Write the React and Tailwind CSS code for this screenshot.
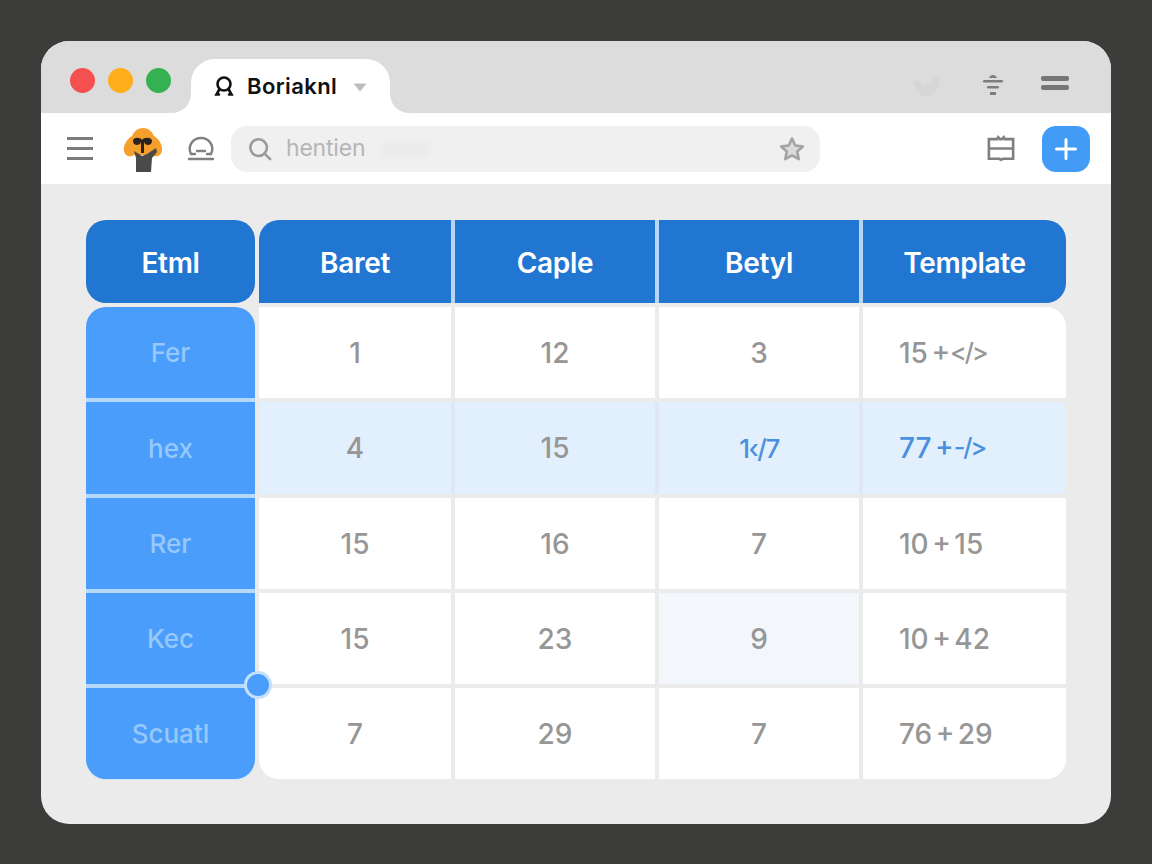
// Browser window with a spreadsheet style table
const Tail = ({ children }) => <span className="text-[25px] tracking-[-2px]">{children}</span>;

const rows = [
  { label: "Fer", cells: ["1", "12", "3", <>15 + <Tail>&lt;/&gt;</Tail></>] },
  { label: "hex", cells: ["4", "15", <span className="text-[26px] tracking-[-1.5px]">1‹/7</span>, <>77 + <Tail>-/&gt;</Tail></>], active: true },
  { label: "Rer", cells: ["15", "16", "7", "10 + 15"] },
  { label: "Kec", cells: ["15", "23", "9", "10 + 42"] },
  { label: "Scuatl", cells: ["7", "29", "7", "76 + 29"] },
];

const headers = [
  { text: "Etml", className: "rounded-[20px]" },
  { text: "Baret", className: "rounded-tl-[20px] shadow-[4px_0_0_#b8d5f5]" },
  { text: "Caple", className: "shadow-[4px_0_0_#b8d5f5]" },
  { text: "Betyl", className: "shadow-[4px_0_0_#b8d5f5]" },
  { text: "Template", className: "rounded-tr-[20px] rounded-br-[20px]" },
];

// Rounded corners and fills for body cells that are not plain white
const cellClass = (rowIndex, cellIndex, active) => {
  const classes = [];
  if (active) classes.push("bg-[#e2effc]");
  else if (rowIndex === 3 && cellIndex === 2) classes.push("bg-[#f3f7fc]");
  else classes.push("bg-white");
  if (active && cellIndex < 3) classes.push("shadow-[4px_0_0_#dfe8f2]");
  if (rowIndex === 0 && cellIndex === 3) classes.push("rounded-tr-[20px]");
  if (rowIndex === 4 && cellIndex === 0) classes.push("rounded-bl-[20px]");
  if (rowIndex === 4 && cellIndex === 3) classes.push("rounded-br-[20px]");
  // The last column starts at a fixed inset instead of being centered
  classes.push(cellIndex === 3 ? "justify-start pl-[36px]" : "justify-center");
  return classes.join(" ");
};

const textClass = (active, cellIndex) =>
  active && cellIndex >= 2 ? "text-[#4a90e0]" : "text-[#969696]";

const labelClass = (rowIndex) => {
  if (rowIndex === 0) return "rounded-t-[20px] shadow-[0_4px_0_#b5d9fc]";
  if (rowIndex === 4) return "rounded-b-[20px] shadow-[0_1px_0_#cfe5fb]";
  return "shadow-[0_4px_0_#b5d9fc]";
};

const TabIcon = () => (
  <svg width="22" height="22" viewBox="0 0 22 22" fill="none" stroke="#111" strokeWidth="2.6" strokeLinecap="round">
    <circle cx="11" cy="9" r="6.5" />
    <path d="M6 15 L3.5 19.5 H6 M16 15 L18.5 19.5 H16" />
  </svg>
);

const Logo = () => (
  <svg width="40" height="46" viewBox="0 0 40 46">
    <path d="M20 1 C26 1 29 5 31 9 C36 12 40 18 39 24 C38 29 33 31 29 28 L11 28 C7 31 2 29 1 24 C0 18 4 12 9 9 C11 5 14 1 20 1 Z" fill="#f59f2c" />
    <path d="M11 24 L16 27 L19 29 L24 27 L33 21 L34 25 L29 31 L28 45 H13 L13 31 Z" fill="#4a4a4a" />
    <path d="M10 14 C10 10 17 10 19 13 C21 10 29 10 29 14 C29 19 22 19 21 15 L21 26 H18 L18 15 C17 19 10 19 10 14 Z" fill="#2a2320" />
  </svg>
);

const App = () => (
  <div className="w-[1152px] h-[864px] bg-[#3c3c3b] p-[41px] font-['Inter',sans-serif]">
    <div className="w-[1070px] h-[783px] rounded-[28px] overflow-hidden bg-[#ebebeb] flex flex-col">
      {/* Title bar */}
      <div className="h-[72px] bg-[#dcdcdc] flex items-end pl-[29px] pr-[42px]">
        <div className="flex gap-[13px] self-start mt-[27px]">
          <span className="size-[25px] rounded-full bg-[#f45050]" />
          <span className="size-[25px] rounded-full bg-[#fdae1a]" />
          <span className="size-[25px] rounded-full bg-[#34b150]" />
        </div>
        <div className="relative ml-[20px] w-[199px] h-[54px] bg-white rounded-t-[24px] flex items-center pl-[22px]">
          <svg className="absolute -left-[20px] bottom-0" width="20" height="20" viewBox="0 0 20 20">
            <path d="M20 0 V20 H0 C12 20 20 12 20 0 Z" fill="#fff" />
          </svg>
          <svg className="absolute -right-[20px] bottom-0" width="20" height="20" viewBox="0 0 20 20">
            <path d="M0 0 V20 H20 C8 20 0 12 0 0 Z" fill="#fff" />
          </svg>
          <TabIcon />
          <span className="ml-[12px] text-[22px] font-semibold text-[#111] leading-none tracking-[0.4px]">Boriaknl</span>
          <svg className="ml-[16px] mt-[2px]" width="14" height="9" viewBox="0 0 14 9">
            <path d="M0.5 0.5 H13.5 L7 8.5 Z" fill="#bdbdbd" />
          </svg>
        </div>
        <div className="ml-auto self-start mt-[30px] flex items-center">
          <svg width="30" height="26" viewBox="0 0 30 26">
            <path d="M2 8 C6 6 9 10 11 14 C13 10 18 10 18 13 C20 8 23 3 27 1 C29 8 26 20 17 23 C9 25 2 18 2 8 Z" fill="#d6d6d6" />
          </svg>
          <svg className="ml-[39px] mb-[4px]" width="24" height="26" viewBox="0 0 24 26" fill="#7d7d7d">
            <path d="M8 7 C9 3 15 3 16 7 Z" />
            <rect x="2" y="9" width="20" height="2.5" rx="1.2" />
            <rect x="6" y="15" width="12" height="2.5" rx="1.2" />
            <rect x="9" y="21" width="6" height="3" />
          </svg>
          <div className="ml-[36px] mb-[6px] w-[28px] flex flex-col gap-[4px]">
            <span className="h-[5px] rounded-[2px] bg-[#757575]" />
            <span className="h-[5px] rounded-[2px] bg-[#757575]" />
          </div>
        </div>
      </div>

      {/* Toolbar */}
      <div className="h-[71px] bg-white flex items-center pl-[26px] pr-[21px]">
        <div className="w-[26px] flex flex-col gap-[7px]">
          <span className="h-[3px] bg-[#7b7b7b]" />
          <span className="h-[3px] bg-[#7b7b7b]" />
          <span className="h-[3px] bg-[#7b7b7b]" />
        </div>
        <div className="ml-[30px] mt-[3px]"><Logo /></div>
        <svg className="ml-[23px]" width="30" height="26" viewBox="0 0 30 26" fill="none" stroke="#808080" strokeWidth="2.4" strokeLinecap="round">
          <path d="M5 18 C1 10 7 2 15 2 C23 2 29 10 25 18" />
          <path d="M5 18 H9 M21 18 H25 M11 15 H19 M3 23 H27" />
        </svg>
        <div className="ml-[15px] w-[589px] h-[46px] rounded-[16px] bg-[#f0f0f0] flex items-center pl-[17px] pr-[14px]">
          <svg width="24" height="24" viewBox="0 0 26 26" fill="none" stroke="#9a9a9a" strokeWidth="2.8" strokeLinecap="round">
            <circle cx="11.5" cy="11.5" r="9" />
            <path d="M18 18 L24 24" />
          </svg>
          <span className="ml-[14px] text-[23px] text-[#b5b5b5] leading-none tracking-[-0.2px]">hentien</span>
          <span className="ml-[16px] w-[48px] h-[14px] rounded-[4px] bg-[#ebebeb] blur-[2px]" />
          <svg className="ml-auto" width="28" height="28" viewBox="0 0 24 24" fill="#dadada" stroke="#a3a3a3" strokeWidth="2.2" strokeLinejoin="round">
            <path d="M12 3 L14.8 9 L21.3 9.8 L16.5 14.2 L17.8 20.7 L12 17.5 L6.2 20.7 L7.5 14.2 L2.7 9.8 L9.2 9 Z" />
          </svg>
        </div>
        <svg className="ml-auto" width="28" height="27" viewBox="0 0 30 28" fill="none" stroke="#7f7f7f" strokeWidth="2.8">
          <path d="M2 4 H11 L12 2 L14 4 H16 L18 2 L19 4 H28 V25 H17 L15 26 L13 25 H2 Z" />
          <path d="M2 14 H28" />
        </svg>
        <button className="ml-[27px] w-[48px] h-[46px] rounded-[14px] bg-[#429bf5] flex items-center justify-center">
          <svg width="22" height="22" viewBox="0 0 22 22" stroke="#fff" strokeWidth="3" strokeLinecap="round">
            <path d="M11 1.5 V20.5 M1.5 11 H20.5" />
          </svg>
        </button>
      </div>

      {/* Table */}
      <div className="px-[45px] pt-[36px]">
        <div className="relative grid grid-cols-[169px_192px_200px_200px_203px] grid-rows-[83px_91px_92px_91px_91px_91px] gap-[4px]">
          {headers.map((header) => (
            <div key={header.text} className={`bg-[#2176d2] flex items-center justify-center pt-[3px] text-white text-[28px] font-semibold tracking-[-0.3px] ${header.className}`}>
              {header.text}
            </div>
          ))}
          {rows.map((row, rowIndex) => (
            <div key={row.label} className="contents">
              <div className={`bg-[#4a9dfa] flex items-center justify-center text-[26px] font-medium text-[#97c8fb] ${labelClass(rowIndex)}`}>
                {row.label}
              </div>
              {row.cells.map((cell, cellIndex) => (
                <div key={cellIndex} className={`flex items-center text-[28px] font-medium [word-spacing:-4px] ${cellClass(rowIndex, cellIndex, row.active)} ${textClass(row.active, cellIndex)}`}>
                  {cell}
                </div>
              ))}
            </div>
          ))}
          {/* Drag handle on the row line */}
          <span className="absolute left-[158px] top-[451px] size-[28px] rounded-full bg-[#4a9dfa] border-[3px] border-[#c5e0fb]" />
        </div>
      </div>
    </div>
  </div>
);

export default App;
